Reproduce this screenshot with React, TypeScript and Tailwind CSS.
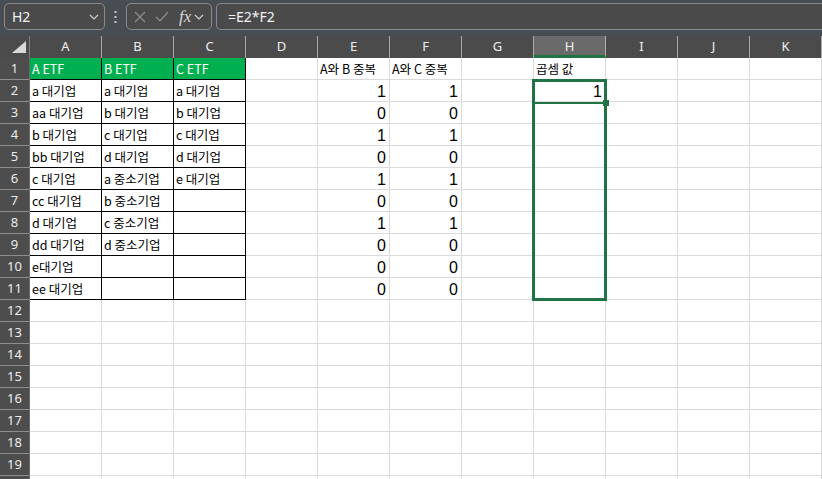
import React from "react";

const COLS = ["A", "B", "C", "D", "E", "F", "G", "H", "I", "J", "K"];

const A = ["a 대기업", "aa 대기업", "b 대기업", "bb 대기업", "c 대기업", "cc 대기업", "d 대기업", "dd 대기업", "e대기업", "ee 대기업"];
const B = ["a 대기업", "b 대기업", "c 대기업", "d 대기업", "a 중소기업", "b 중소기업", "c 중소기업", "d 중소기업", "", ""];
const C = ["a 대기업", "b 대기업", "c 대기업", "d 대기업", "e 대기업", "", "", "", "", ""];
const E = [1, 0, 1, 0, 1, 0, 1, 0, 0, 0];

function valueAt(r: number, c: number): string | number {
  if (r === 1) {
    return ["A ETF", "B ETF", "C ETF", "", "A와 B 중복", "A와 C 중복", "", "곱셈 값", "", "", ""][c];
  }
  if (r >= 2 && r <= 11) {
    const i = r - 2;
    if (c === 0) return A[i];
    if (c === 1) return B[i];
    if (c === 2) return C[i];
    if (c === 4 || c === 5) return E[i];
    if (c === 7 && r === 2) return 1;
  }
  return "";
}

const KR = "font-['Noto_Sans_CJK_KR','Noto_Sans',sans-serif]";

function Cell({ r, c }: { r: number; c: number }) {
  const v = valueAt(r, c);
  const inTable = c < 3 && r <= 11;
  const green = r === 1 && c < 3;
  const isNum = typeof v === "number";
  const border = inTable ? "border-black" : "border-[#dadada]";
  const bg = green ? "bg-[#00b050] text-white" : "bg-white text-black";
  if (isNum) {
    return (
      <div
        className={`h-[22px] border-r border-b ${border} ${bg} flex items-center justify-end pr-[3px] pt-[2px] overflow-hidden whitespace-nowrap font-['Liberation_Sans',Arial,sans-serif] text-[16px] leading-[18px]`}
      >
        {v}
      </div>
    );
  }
  return (
    <div
      className={`h-[22px] border-r border-b ${border} ${bg} flex items-center pl-[2px] pt-[1px] overflow-visible whitespace-nowrap ${KR} text-[12.5px] leading-[16px]`}
    >
      {v}
    </div>
  );
}

function Chevron({ className }: { className?: string }) {
  return (
    <svg width="10" height="6" viewBox="0 0 10 6" className={className}>
      <polyline points="1,1 5,5 9,1" fill="none" stroke="#d0d0d0" strokeWidth="1.2" />
    </svg>
  );
}

export default function App() {
  const rows = Array.from({ length: 20 }, (_, i) => i + 1);
  return (
    <div className="w-[822px] h-[479px] overflow-hidden bg-white flex flex-col">
      {/* Formula bar */}
      <div className="h-[36px] shrink-0 bg-[#484d53] flex items-start pt-[3px] pl-[4px] gap-0">
        <div className="w-[101px] h-[27px] rounded-[5px] border border-[#8a8a8a] bg-[#4a4a4a] flex items-center justify-between pl-[7px] pr-[5px] text-[#f2f2f2] font-['Noto_Sans',sans-serif] text-[14px]">
          <span>H2</span>
          <Chevron />
        </div>
        <div className="w-[21px] h-[27px] flex items-center justify-center">
          <svg width="3" height="12" viewBox="0 0 3 12">
            <rect x="0.5" y="0" width="2" height="2" fill="#c8c8c8" />
            <rect x="0.5" y="5" width="2" height="2" fill="#c8c8c8" />
            <rect x="0.5" y="10" width="2" height="2" fill="#c8c8c8" />
          </svg>
        </div>
        <div className="w-[86px] h-[27px] rounded-[5px] border border-[#8a8a8a] bg-[#4a4a4a] flex items-center pl-[7px]">
          <svg width="12" height="12" viewBox="0 0 12 12" className="mr-[9px]">
            <path d="M1 1 L11 11 M11 1 L1 11" stroke="#8e8e8e" strokeWidth="1.2" fill="none" />
          </svg>
          <svg width="14" height="11" viewBox="0 0 14 11" className="mr-[10px]">
            <polyline points="1,6 5,10 13,1" stroke="#8e8e8e" strokeWidth="1.2" fill="none" />
          </svg>
          <span className="font-['Liberation_Serif',serif] italic text-[17px] leading-[18px] text-[#d6d6d6] mr-[3px]">fx</span>
          <Chevron />
        </div>
        <div className="ml-[4px] flex-1 h-[27px] rounded-l-[5px] border border-r-0 border-[#8a8a8a] bg-[#4a4a4a] flex items-center pl-[11px] text-[#f2f2f2] font-['Noto_Sans',sans-serif] text-[14px]">
          =E2*F2
        </div>
      </div>

      {/* Grid */}
      <div className="relative flex-1 overflow-hidden">
        <div className="grid grid-cols-[30px_repeat(11,72px)]">
          {/* Header row */}
          <div className="h-[22px] bg-[#4b4b4b] border-r border-[#7c7c7c] relative">
            <svg width="14" height="12" viewBox="0 0 14 12" className="absolute left-[12px] top-[5px]">
              <polygon points="14,0 14,12 0,12" fill="#d9d9d9" />
            </svg>
          </div>
          {COLS.map((col, i) =>
            i === 7 ? (
              <div
                key={col}
                className="h-[22px] bg-[#6a6a6a] border-r border-[#b0b0b0] border-b-[3px] border-b-[#217346] flex items-center justify-center pt-[2px] text-[#f0f0f0] font-['Noto_Sans',sans-serif] text-[13px]"
              >
                {col}
              </div>
            ) : (
              <div
                key={col}
                className="h-[22px] bg-[#4b4b4b] border-r border-[#a8a8a8] flex items-center justify-center text-[#f0f0f0] font-['Noto_Sans',sans-serif] text-[13px]"
              >
                {col}
              </div>
            )
          )}

          {rows.map((r) => (
            <React.Fragment key={r}>
              <div className="h-[22px] bg-[#4d4d4d] border-b border-[#8e8e8e] border-r border-r-[#6a6a6a] flex items-center justify-center text-[#ececec] font-['Noto_Sans',sans-serif] text-[13px]">
                {r < 20 ? r : ""}
              </div>
              {COLS.map((_, c) => (
                <Cell key={c} r={r} c={c} />
              ))}
            </React.Fragment>
          ))}
        </div>

        {/* Selection overlay H2:H11 */}
        <div className="absolute left-[532px] top-[43px] w-[75px] h-[222px] border-[3px] border-[#217346] pointer-events-none" />
        <div className="absolute left-[535px] top-[66px] w-[69px] h-[2px] bg-[#217346]" />
        <div className="absolute left-[603px] top-[64px] w-[6px] h-[6px] bg-[#217346]" />
      </div>
    </div>
  );
}
